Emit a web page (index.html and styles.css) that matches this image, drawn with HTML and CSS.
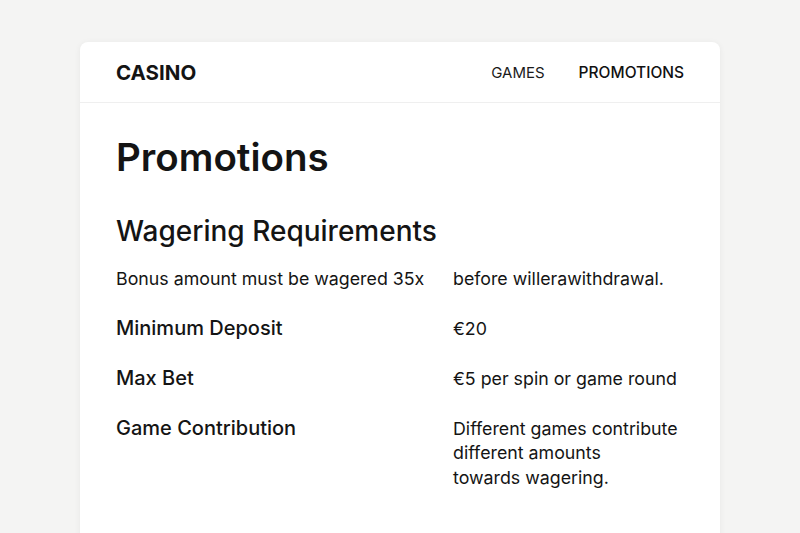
FILE: index.html
```html
<!DOCTYPE html>
<html lang="en">
<head>
<meta charset="utf-8">
<title>Casino - Promotions</title>
<link rel="stylesheet" href="styles.css">
</head>
<body>
<div class="card">
  <header class="header">
    <div class="logo">CASINO</div>
    <nav class="nav">
      <a class="nav-link" href="#">GAMES</a>
      <a class="nav-link active" href="#">PROMOTIONS</a>
    </nav>
  </header>
  <main class="content">
    <h1 class="title">Promotions</h1>
    <h2 class="subtitle">Wagering Requirements</h2>
    <div class="terms">
      <div class="term small">Bonus amount must be wagered 35x</div>
      <div class="value">before willerawithdrawal.</div>
      <div class="term">Minimum Deposit</div>
      <div class="value">€20</div>
      <div class="term">Max Bet</div>
      <div class="value">€5 per spin or game round</div>
      <div class="term">Game Contribution</div>
      <div class="value">Different games contribute<br>different amounts<br>towards wagering.</div>
    </div>
  </main>
</div>
</body>
</html>
```
FILE: styles.css
```css
html, body {
  margin: 0;
  padding: 0;
}
body {
  background: #f4f4f3;
  font-family: Inter, "Noto Sans", sans-serif;
  color: #141414;
  height: 533px;
  overflow: hidden;
}
.card {
  width: 640px;
  margin: 42px auto 0;
  background: #ffffff;
  border-radius: 8px;
  box-shadow: 0 1px 6px rgba(0, 0, 0, 0.06);
  min-height: 560px;
}
.header {
  height: 60px;
  padding: 0 36px;
  display: flex;
  align-items: center;
  justify-content: space-between;
  border-bottom: 1px solid #efefef;
}
.logo {
  font-size: 20.5px;
  font-weight: 700;
}
.nav {
  display: flex;
  gap: 34px;
}
.nav-link {
  color: #1a1a1a;
  text-decoration: none;
  font-size: 15px;
  font-weight: 400;
}
.nav-link.active {
  font-size: 15.5px;
  font-weight: 500;
  color: #111111;
}
.content {
  padding: 31px 36px 40px;
}
.title {
  margin: 0;
  font-size: 38.5px;
  line-height: 46px;
  font-weight: 600;
}
.subtitle {
  margin: 34px 0 0;
  font-size: 28px;
  line-height: 34px;
  font-weight: 500;
}
.terms {
  margin-top: 18.5px;
  display: grid;
  grid-template-columns: 337px 240px;
  align-items: baseline;
  row-gap: 24.5px;
  font-size: 17.8px;
  line-height: 24.5px;
}
.term {
  font-size: 20px;
  font-weight: 500;
}
.term.small {
  font-size: 17.8px;
  font-weight: 400;
}
```
